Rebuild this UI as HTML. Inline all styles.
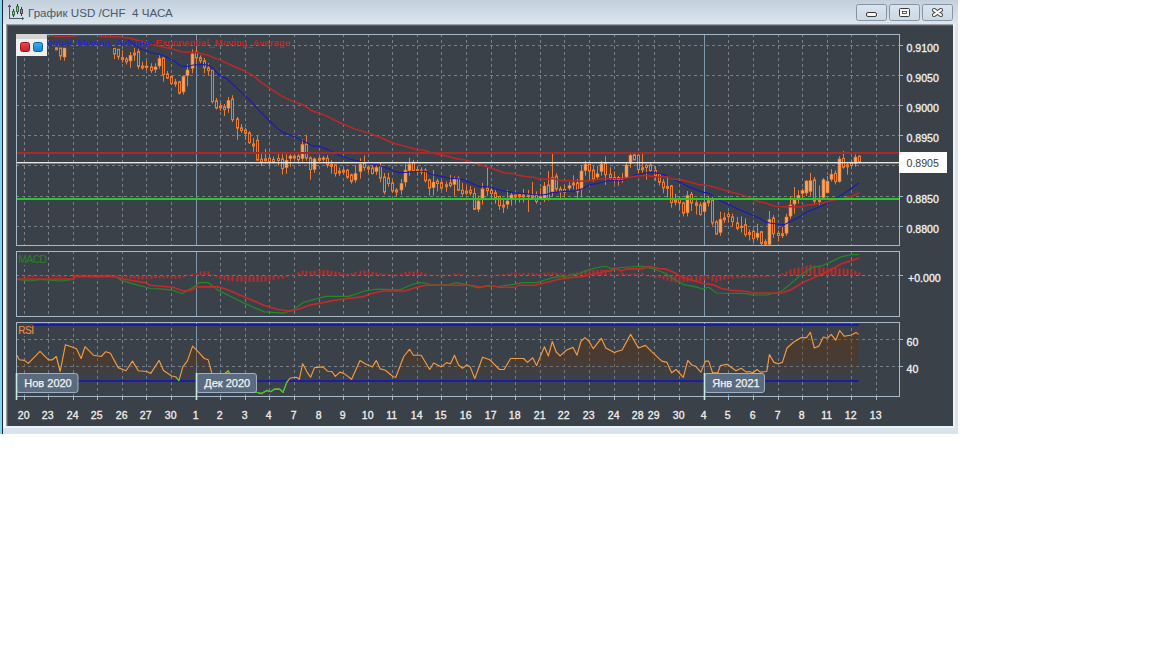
<!DOCTYPE html><html><head><meta charset="utf-8"><style>html,body{margin:0;padding:0;background:#fff;width:1152px;height:648px;overflow:hidden}svg{position:absolute;left:0;top:0;font-family:"Liberation Sans",sans-serif}</style></head><body><svg width="1152" height="648" viewBox="0 0 1152 648"><rect x="0" y="0" width="958" height="434" fill="#d9e3ee"/><defs><linearGradient id="tb" x1="0" y1="0" x2="0" y2="1"><stop offset="0" stop-color="#c3cfdb"/><stop offset="0.85" stop-color="#d6e2ec"/><stop offset="1" stop-color="#dce7f1"/></linearGradient><linearGradient id="rsifill" x1="0" y1="0" x2="0" y2="1"><stop offset="0" stop-color="#5a3a1c"/><stop offset="1" stop-color="#4a3c30"/></linearGradient><linearGradient id="btn" x1="0" y1="0" x2="0" y2="1"><stop offset="0" stop-color="#dbe4ee"/><stop offset="1" stop-color="#cdd8e4"/></linearGradient><linearGradient id="redb" x1="0" y1="0" x2="0" y2="1"><stop offset="0" stop-color="#f04848"/><stop offset="1" stop-color="#c81e2a"/></linearGradient><linearGradient id="blueb" x1="0" y1="0" x2="0" y2="1"><stop offset="0" stop-color="#30b4f0"/><stop offset="1" stop-color="#1a80cc"/></linearGradient><clipPath id="mainclip"><rect x="17" y="35" width="882" height="210"/></clipPath><clipPath id="macdclip"><rect x="17" y="252" width="882" height="63"/></clipPath><clipPath id="lowclip"><rect x="0" y="380.6" width="1152" height="30"/></clipPath><linearGradient id="rsig" gradientUnits="userSpaceOnUse" x1="0" y1="325" x2="0" y2="381"><stop offset="0" stop-color="#643005" stop-opacity="0.45"/><stop offset="0.625" stop-color="#643005" stop-opacity="0.33"/><stop offset="0.84" stop-color="#643005" stop-opacity="0.08"/><stop offset="1" stop-color="#643005" stop-opacity="0"/></linearGradient><clipPath id="rsiclip"><rect x="17" y="323" width="882" height="73"/></clipPath></defs><rect x="3" y="0" width="955" height="24" fill="url(#tb)"/><rect x="0" y="0" width="2" height="434" fill="#84d4f4"/><rect x="2" y="0" width="1" height="434" fill="#1a2430"/><rect x="3" y="24" width="952" height="404" fill="#eef3f8"/><rect x="6" y="24" width="947" height="402" fill="#9a9ea2"/><rect x="7" y="25" width="946" height="401" fill="#585e66"/><rect x="8" y="26" width="945" height="400" fill="#3b4149"/><g fill="none" stroke="#4a5562" stroke-width="1" shape-rendering="crispEdges"><path d="M9.5 5 V18.5 H23"/><path d="M8 6.5 H11"/></g><path d="M7.8 6.8 L9.5 4.3 L11.2 6.8 Z" fill="#4a5562"/><path d="M22 16.8 L24.2 18.5 L22 20.2 Z" fill="#4a5562"/><g stroke="#2e3c34" stroke-width="1" shape-rendering="crispEdges"><path d="M13.5 9 V17"/><path d="M17.5 4 V14"/><path d="M21.5 7 V16"/></g><rect x="12.5" y="11.5" width="2" height="3.5" fill="#98cc98" stroke="#3c6e44" stroke-width="1"/><rect x="16.5" y="6.5" width="2" height="5" fill="#90c890" stroke="#3c6e44" stroke-width="1"/><rect x="20.5" y="9.5" width="2" height="4" fill="#c08aa0" stroke="#5a4050" stroke-width="1"/><text x="28" y="17" font-size="11.6" fill="#4e5862" xml:space="preserve">График USD /CHF  4 ЧАСА</text><rect x="856.5" y="4.5" width="30" height="16" rx="2" fill="url(#btn)" stroke="#8594a4"/><rect x="889.5" y="4.5" width="30" height="16" rx="2" fill="url(#btn)" stroke="#8594a4"/><rect x="922.5" y="4.5" width="30" height="16" rx="2" fill="url(#btn)" stroke="#8594a4"/><rect x="866.5" y="12.5" width="10" height="4" rx="1.5" fill="#f4f4f4" stroke="#3a3a3a" stroke-width="1"/><rect x="899.5" y="8.5" width="10" height="8" rx="1" fill="#f4f4f4" stroke="#3a3a3a" stroke-width="1"/><rect x="902.5" y="11.5" width="4" height="2" fill="#f4f4f4" stroke="#3a3a3a" stroke-width="0.8"/><path d="M934 10 L941 15 M941 10 L934 15" stroke="#3a3a3a" stroke-width="4" stroke-linecap="round"/><path d="M934 10 L941 15 M941 10 L934 15" stroke="#f6f6f6" stroke-width="2.2" stroke-linecap="round"/><g shape-rendering="crispEdges"><line x1="24.5" y1="34" x2="24.5" y2="245" stroke="#75808b" stroke-width="1" stroke-dasharray="3 3"/><line x1="48.5" y1="34" x2="48.5" y2="245" stroke="#75808b" stroke-width="1" stroke-dasharray="3 3"/><line x1="73.5" y1="34" x2="73.5" y2="245" stroke="#75808b" stroke-width="1" stroke-dasharray="3 3"/><line x1="97.5" y1="34" x2="97.5" y2="245" stroke="#75808b" stroke-width="1" stroke-dasharray="3 3"/><line x1="122.5" y1="34" x2="122.5" y2="245" stroke="#75808b" stroke-width="1" stroke-dasharray="3 3"/><line x1="146.5" y1="34" x2="146.5" y2="245" stroke="#75808b" stroke-width="1" stroke-dasharray="3 3"/><line x1="171.5" y1="34" x2="171.5" y2="245" stroke="#75808b" stroke-width="1" stroke-dasharray="3 3"/><line x1="196.5" y1="34" x2="196.5" y2="245" stroke="#8298ac" stroke-width="1"/><line x1="220.5" y1="34" x2="220.5" y2="245" stroke="#75808b" stroke-width="1" stroke-dasharray="3 3"/><line x1="245.5" y1="34" x2="245.5" y2="245" stroke="#75808b" stroke-width="1" stroke-dasharray="3 3"/><line x1="269.5" y1="34" x2="269.5" y2="245" stroke="#75808b" stroke-width="1" stroke-dasharray="3 3"/><line x1="294.5" y1="34" x2="294.5" y2="245" stroke="#75808b" stroke-width="1" stroke-dasharray="3 3"/><line x1="319.5" y1="34" x2="319.5" y2="245" stroke="#75808b" stroke-width="1" stroke-dasharray="3 3"/><line x1="343.5" y1="34" x2="343.5" y2="245" stroke="#75808b" stroke-width="1" stroke-dasharray="3 3"/><line x1="368.5" y1="34" x2="368.5" y2="245" stroke="#75808b" stroke-width="1" stroke-dasharray="3 3"/><line x1="392.5" y1="34" x2="392.5" y2="245" stroke="#75808b" stroke-width="1" stroke-dasharray="3 3"/><line x1="417.5" y1="34" x2="417.5" y2="245" stroke="#75808b" stroke-width="1" stroke-dasharray="3 3"/><line x1="441.5" y1="34" x2="441.5" y2="245" stroke="#75808b" stroke-width="1" stroke-dasharray="3 3"/><line x1="466.5" y1="34" x2="466.5" y2="245" stroke="#75808b" stroke-width="1" stroke-dasharray="3 3"/><line x1="491.5" y1="34" x2="491.5" y2="245" stroke="#75808b" stroke-width="1" stroke-dasharray="3 3"/><line x1="515.5" y1="34" x2="515.5" y2="245" stroke="#75808b" stroke-width="1" stroke-dasharray="3 3"/><line x1="540.5" y1="34" x2="540.5" y2="245" stroke="#75808b" stroke-width="1" stroke-dasharray="3 3"/><line x1="564.5" y1="34" x2="564.5" y2="245" stroke="#75808b" stroke-width="1" stroke-dasharray="3 3"/><line x1="589.5" y1="34" x2="589.5" y2="245" stroke="#75808b" stroke-width="1" stroke-dasharray="3 3"/><line x1="614.5" y1="34" x2="614.5" y2="245" stroke="#75808b" stroke-width="1" stroke-dasharray="3 3"/><line x1="638.5" y1="34" x2="638.5" y2="245" stroke="#75808b" stroke-width="1" stroke-dasharray="3 3"/><line x1="654.5" y1="34" x2="654.5" y2="245" stroke="#75808b" stroke-width="1" stroke-dasharray="3 3"/><line x1="679.5" y1="34" x2="679.5" y2="245" stroke="#75808b" stroke-width="1" stroke-dasharray="3 3"/><line x1="704.5" y1="34" x2="704.5" y2="245" stroke="#8298ac" stroke-width="1"/><line x1="728.5" y1="34" x2="728.5" y2="245" stroke="#75808b" stroke-width="1" stroke-dasharray="3 3"/><line x1="753.5" y1="34" x2="753.5" y2="245" stroke="#75808b" stroke-width="1" stroke-dasharray="3 3"/><line x1="778.5" y1="34" x2="778.5" y2="245" stroke="#75808b" stroke-width="1" stroke-dasharray="3 3"/><line x1="802.5" y1="34" x2="802.5" y2="245" stroke="#75808b" stroke-width="1" stroke-dasharray="3 3"/><line x1="827.5" y1="34" x2="827.5" y2="245" stroke="#75808b" stroke-width="1" stroke-dasharray="3 3"/><line x1="851.5" y1="34" x2="851.5" y2="245" stroke="#75808b" stroke-width="1" stroke-dasharray="3 3"/><line x1="876.5" y1="34" x2="876.5" y2="245" stroke="#75808b" stroke-width="1" stroke-dasharray="3 3"/><line x1="16" y1="45.5" x2="899" y2="45.5" stroke="#75808b" stroke-width="1" stroke-dasharray="3 3"/><line x1="16" y1="75.5" x2="899" y2="75.5" stroke="#75808b" stroke-width="1" stroke-dasharray="3 3"/><line x1="16" y1="105.5" x2="899" y2="105.5" stroke="#75808b" stroke-width="1" stroke-dasharray="3 3"/><line x1="16" y1="135.5" x2="899" y2="135.5" stroke="#75808b" stroke-width="1" stroke-dasharray="3 3"/><line x1="16" y1="165.5" x2="899" y2="165.5" stroke="#75808b" stroke-width="1" stroke-dasharray="3 3"/><line x1="16" y1="196.5" x2="899" y2="196.5" stroke="#75808b" stroke-width="1" stroke-dasharray="3 3"/><line x1="16" y1="226.5" x2="899" y2="226.5" stroke="#75808b" stroke-width="1" stroke-dasharray="3 3"/><line x1="24.5" y1="251" x2="24.5" y2="316" stroke="#75808b" stroke-width="1" stroke-dasharray="3 3"/><line x1="48.5" y1="251" x2="48.5" y2="316" stroke="#75808b" stroke-width="1" stroke-dasharray="3 3"/><line x1="73.5" y1="251" x2="73.5" y2="316" stroke="#75808b" stroke-width="1" stroke-dasharray="3 3"/><line x1="97.5" y1="251" x2="97.5" y2="316" stroke="#75808b" stroke-width="1" stroke-dasharray="3 3"/><line x1="122.5" y1="251" x2="122.5" y2="316" stroke="#75808b" stroke-width="1" stroke-dasharray="3 3"/><line x1="146.5" y1="251" x2="146.5" y2="316" stroke="#75808b" stroke-width="1" stroke-dasharray="3 3"/><line x1="171.5" y1="251" x2="171.5" y2="316" stroke="#75808b" stroke-width="1" stroke-dasharray="3 3"/><line x1="196.5" y1="251" x2="196.5" y2="316" stroke="#8298ac" stroke-width="1"/><line x1="220.5" y1="251" x2="220.5" y2="316" stroke="#75808b" stroke-width="1" stroke-dasharray="3 3"/><line x1="245.5" y1="251" x2="245.5" y2="316" stroke="#75808b" stroke-width="1" stroke-dasharray="3 3"/><line x1="269.5" y1="251" x2="269.5" y2="316" stroke="#75808b" stroke-width="1" stroke-dasharray="3 3"/><line x1="294.5" y1="251" x2="294.5" y2="316" stroke="#75808b" stroke-width="1" stroke-dasharray="3 3"/><line x1="319.5" y1="251" x2="319.5" y2="316" stroke="#75808b" stroke-width="1" stroke-dasharray="3 3"/><line x1="343.5" y1="251" x2="343.5" y2="316" stroke="#75808b" stroke-width="1" stroke-dasharray="3 3"/><line x1="368.5" y1="251" x2="368.5" y2="316" stroke="#75808b" stroke-width="1" stroke-dasharray="3 3"/><line x1="392.5" y1="251" x2="392.5" y2="316" stroke="#75808b" stroke-width="1" stroke-dasharray="3 3"/><line x1="417.5" y1="251" x2="417.5" y2="316" stroke="#75808b" stroke-width="1" stroke-dasharray="3 3"/><line x1="441.5" y1="251" x2="441.5" y2="316" stroke="#75808b" stroke-width="1" stroke-dasharray="3 3"/><line x1="466.5" y1="251" x2="466.5" y2="316" stroke="#75808b" stroke-width="1" stroke-dasharray="3 3"/><line x1="491.5" y1="251" x2="491.5" y2="316" stroke="#75808b" stroke-width="1" stroke-dasharray="3 3"/><line x1="515.5" y1="251" x2="515.5" y2="316" stroke="#75808b" stroke-width="1" stroke-dasharray="3 3"/><line x1="540.5" y1="251" x2="540.5" y2="316" stroke="#75808b" stroke-width="1" stroke-dasharray="3 3"/><line x1="564.5" y1="251" x2="564.5" y2="316" stroke="#75808b" stroke-width="1" stroke-dasharray="3 3"/><line x1="589.5" y1="251" x2="589.5" y2="316" stroke="#75808b" stroke-width="1" stroke-dasharray="3 3"/><line x1="614.5" y1="251" x2="614.5" y2="316" stroke="#75808b" stroke-width="1" stroke-dasharray="3 3"/><line x1="638.5" y1="251" x2="638.5" y2="316" stroke="#75808b" stroke-width="1" stroke-dasharray="3 3"/><line x1="654.5" y1="251" x2="654.5" y2="316" stroke="#75808b" stroke-width="1" stroke-dasharray="3 3"/><line x1="679.5" y1="251" x2="679.5" y2="316" stroke="#75808b" stroke-width="1" stroke-dasharray="3 3"/><line x1="704.5" y1="251" x2="704.5" y2="316" stroke="#8298ac" stroke-width="1"/><line x1="728.5" y1="251" x2="728.5" y2="316" stroke="#75808b" stroke-width="1" stroke-dasharray="3 3"/><line x1="753.5" y1="251" x2="753.5" y2="316" stroke="#75808b" stroke-width="1" stroke-dasharray="3 3"/><line x1="778.5" y1="251" x2="778.5" y2="316" stroke="#75808b" stroke-width="1" stroke-dasharray="3 3"/><line x1="802.5" y1="251" x2="802.5" y2="316" stroke="#75808b" stroke-width="1" stroke-dasharray="3 3"/><line x1="827.5" y1="251" x2="827.5" y2="316" stroke="#75808b" stroke-width="1" stroke-dasharray="3 3"/><line x1="851.5" y1="251" x2="851.5" y2="316" stroke="#75808b" stroke-width="1" stroke-dasharray="3 3"/><line x1="876.5" y1="251" x2="876.5" y2="316" stroke="#75808b" stroke-width="1" stroke-dasharray="3 3"/><line x1="16" y1="275.5" x2="899" y2="275.5" stroke="#75808b" stroke-width="1" stroke-dasharray="3 3"/><line x1="24.5" y1="322" x2="24.5" y2="396" stroke="#75808b" stroke-width="1" stroke-dasharray="3 3"/><line x1="48.5" y1="322" x2="48.5" y2="396" stroke="#75808b" stroke-width="1" stroke-dasharray="3 3"/><line x1="73.5" y1="322" x2="73.5" y2="396" stroke="#75808b" stroke-width="1" stroke-dasharray="3 3"/><line x1="97.5" y1="322" x2="97.5" y2="396" stroke="#75808b" stroke-width="1" stroke-dasharray="3 3"/><line x1="122.5" y1="322" x2="122.5" y2="396" stroke="#75808b" stroke-width="1" stroke-dasharray="3 3"/><line x1="146.5" y1="322" x2="146.5" y2="396" stroke="#75808b" stroke-width="1" stroke-dasharray="3 3"/><line x1="171.5" y1="322" x2="171.5" y2="396" stroke="#75808b" stroke-width="1" stroke-dasharray="3 3"/><line x1="196.5" y1="322" x2="196.5" y2="396" stroke="#8298ac" stroke-width="1"/><line x1="220.5" y1="322" x2="220.5" y2="396" stroke="#75808b" stroke-width="1" stroke-dasharray="3 3"/><line x1="245.5" y1="322" x2="245.5" y2="396" stroke="#75808b" stroke-width="1" stroke-dasharray="3 3"/><line x1="269.5" y1="322" x2="269.5" y2="396" stroke="#75808b" stroke-width="1" stroke-dasharray="3 3"/><line x1="294.5" y1="322" x2="294.5" y2="396" stroke="#75808b" stroke-width="1" stroke-dasharray="3 3"/><line x1="319.5" y1="322" x2="319.5" y2="396" stroke="#75808b" stroke-width="1" stroke-dasharray="3 3"/><line x1="343.5" y1="322" x2="343.5" y2="396" stroke="#75808b" stroke-width="1" stroke-dasharray="3 3"/><line x1="368.5" y1="322" x2="368.5" y2="396" stroke="#75808b" stroke-width="1" stroke-dasharray="3 3"/><line x1="392.5" y1="322" x2="392.5" y2="396" stroke="#75808b" stroke-width="1" stroke-dasharray="3 3"/><line x1="417.5" y1="322" x2="417.5" y2="396" stroke="#75808b" stroke-width="1" stroke-dasharray="3 3"/><line x1="441.5" y1="322" x2="441.5" y2="396" stroke="#75808b" stroke-width="1" stroke-dasharray="3 3"/><line x1="466.5" y1="322" x2="466.5" y2="396" stroke="#75808b" stroke-width="1" stroke-dasharray="3 3"/><line x1="491.5" y1="322" x2="491.5" y2="396" stroke="#75808b" stroke-width="1" stroke-dasharray="3 3"/><line x1="515.5" y1="322" x2="515.5" y2="396" stroke="#75808b" stroke-width="1" stroke-dasharray="3 3"/><line x1="540.5" y1="322" x2="540.5" y2="396" stroke="#75808b" stroke-width="1" stroke-dasharray="3 3"/><line x1="564.5" y1="322" x2="564.5" y2="396" stroke="#75808b" stroke-width="1" stroke-dasharray="3 3"/><line x1="589.5" y1="322" x2="589.5" y2="396" stroke="#75808b" stroke-width="1" stroke-dasharray="3 3"/><line x1="614.5" y1="322" x2="614.5" y2="396" stroke="#75808b" stroke-width="1" stroke-dasharray="3 3"/><line x1="638.5" y1="322" x2="638.5" y2="396" stroke="#75808b" stroke-width="1" stroke-dasharray="3 3"/><line x1="654.5" y1="322" x2="654.5" y2="396" stroke="#75808b" stroke-width="1" stroke-dasharray="3 3"/><line x1="679.5" y1="322" x2="679.5" y2="396" stroke="#75808b" stroke-width="1" stroke-dasharray="3 3"/><line x1="704.5" y1="322" x2="704.5" y2="396" stroke="#8298ac" stroke-width="1"/><line x1="728.5" y1="322" x2="728.5" y2="396" stroke="#75808b" stroke-width="1" stroke-dasharray="3 3"/><line x1="753.5" y1="322" x2="753.5" y2="396" stroke="#75808b" stroke-width="1" stroke-dasharray="3 3"/><line x1="778.5" y1="322" x2="778.5" y2="396" stroke="#75808b" stroke-width="1" stroke-dasharray="3 3"/><line x1="802.5" y1="322" x2="802.5" y2="396" stroke="#75808b" stroke-width="1" stroke-dasharray="3 3"/><line x1="827.5" y1="322" x2="827.5" y2="396" stroke="#75808b" stroke-width="1" stroke-dasharray="3 3"/><line x1="851.5" y1="322" x2="851.5" y2="396" stroke="#75808b" stroke-width="1" stroke-dasharray="3 3"/><line x1="876.5" y1="322" x2="876.5" y2="396" stroke="#75808b" stroke-width="1" stroke-dasharray="3 3"/><line x1="16" y1="339.5" x2="899" y2="339.5" stroke="#75808b" stroke-width="1" stroke-dasharray="3 3"/><line x1="16" y1="366.5" x2="899" y2="366.5" stroke="#75808b" stroke-width="1" stroke-dasharray="3 3"/></g><g clip-path="url(#mainclip)"><path d="M24.5 10.0V20.0M28.5 10.0V20.0M32.5 10.0V20.0M36.5 10.0V20.0M40.5 10.0V20.0M44.5 10.0V20.0M48.5 10.0V20.0M52.5 10.0V20.0M56.5 47.5V49.0M60.5 48.0V60.0M64.5 48.0V60.7M69.5 20.0V35.5M73.5 20.0V35.5M77.5 20.0V35.5M81.5 20.0V35.5M85.5 10.0V25.0M89.5 10.0V25.0M93.5 10.0V25.0M97.5 10.0V25.0M101.5 20.0V35.5M105.5 20.0V35.5M110.5 20.0V35.5M114.5 48.0V59.0M118.5 49.0V59.7M122.5 50.2V62.7M126.5 57.0V64.5M130.5 52.0V67.8M134.5 47.9V60.9M138.5 48.8V69.2M142.5 61.8V69.6M146.5 60.9V70.1M151.5 63.2V72.9M155.5 63.2V72.9M159.5 55.3V68.7M163.5 57.0V81.7M167.5 71.0V78.9M171.5 75.2V84.9M175.5 78.9V86.8M179.5 80.7V94.6M183.5 75.2V94.6M187.5 64.3V86.3M192.5 49.3V73.3M196.5 48.3V62.2M200.5 55.3V63.1M204.5 58.0V73.3M208.5 63.1V75.2M212.5 69.6V103.5M216.5 98.0V109.5M220.5 103.0V110.9M224.5 104.0V116.0M228.5 97.0V112.8M232.5 95.2V122.0M237.5 117.0V139.8M241.5 124.0V132.9M245.5 127.8V139.8M249.5 131.0V144.0M253.5 138.0V151.8M257.5 135.6V160.6M261.5 154.1V166.0M265.5 149.0V161.6M269.5 151.4V165.3M273.5 156.5V163.4M278.5 154.2V165.8M282.5 154.2V174.6M286.5 154.2V173.7M290.5 154.2V166.7M294.5 152.4V160.3M298.5 154.2V163.5M302.5 139.0V161.6M306.5 134.8V160.7M310.5 156.0V179.7M314.5 157.5V172.8M319.5 156.0V163.0M323.5 156.0V161.6M327.5 155.2V167.7M331.5 160.3V173.7M335.5 164.8V176.6M339.5 167.5V175.8M343.5 166.6V174.4M347.5 168.9V179.0M351.5 173.5V183.7M355.5 165.2V182.8M360.5 158.2V178.6M364.5 155.4V170.7M368.5 165.2V173.0M372.5 165.2V174.4M376.5 165.2V174.9M380.5 162.9V182.3M384.5 173.0V194.3M388.5 172.9V186.8M392.5 179.8V192.8M396.5 188.1V196.0M401.5 178.9V194.6M405.5 164.1V186.8M409.5 158.0V175.6M413.5 159.9V171.0M417.5 166.0V175.6M421.5 167.3V174.7M425.5 168.2V182.6M429.5 178.9V195.6M433.5 170.1V195.6M437.5 178.9V191.4M441.5 180.7V190.0M446.5 181.5V191.7M450.5 175.0V187.5M454.5 176.4V195.8M458.5 176.4V190.3M462.5 182.9V195.8M466.5 186.1V195.4M470.5 186.0V195.4M474.5 188.0V210.0M478.5 195.8V212.0M482.5 182.9V204.6M487.5 168.0V195.8M491.5 188.0V198.1M495.5 189.9V203.7M499.5 196.0V209.8M503.5 197.8V213.0M507.5 189.9V208.9M511.5 193.1V205.6M515.5 194.5V202.9M519.5 194.1V202.4M523.5 189.0V202.4M528.5 189.9V212.1M532.5 182.0V196.9M536.5 191.3V203.8M540.5 188.0V199.6M544.5 182.0V202.0M548.5 171.0V200.5M552.5 152.5V196.0M556.5 173.3V191.8M560.5 186.3V198.8M564.5 184.9V196.5M569.5 182.1V190.9M573.5 175.2V189.5M577.5 178.9V198.8M581.5 165.9V197.4M585.5 160.8V175.6M589.5 163.6V179.8M593.5 165.4V181.6M597.5 165.9V179.8M601.5 160.8V175.6M605.5 156.2V184.9M610.5 167.3V179.8M614.5 171.5V183.5M618.5 176.1V185.8M622.5 172.9V182.6M626.5 163.1V178.0M630.5 153.9V167.8M634.5 152.0V160.4M638.5 154.4V174.3M642.5 152.0V173.8M646.5 163.6V179.8M650.5 162.7V171.5M655.5 166.0V180.7M659.5 173.0V185.5M663.5 179.0V193.3M667.5 178.0V197.5M671.5 185.0V207.7M675.5 193.8V205.4M679.5 196.6V210.0M683.5 201.7V216.5M687.5 191.0V216.5M691.5 192.0V211.0M696.5 200.3V214.6M700.5 202.1V215.6M704.5 201.7V212.8M708.5 196.1V206.5M712.5 197.0V225.7M716.5 220.1V234.9M720.5 211.8V235.9M724.5 212.7V222.9M728.5 211.8V222.0M732.5 213.6V226.6M737.5 216.9V230.3M741.5 216.4V232.6M745.5 218.3V236.8M749.5 229.4V240.5M753.5 229.4V243.3M757.5 223.8V240.5M761.5 230.8V246.0M765.5 239.2V246.0M769.5 211.0V246.0M773.5 215.2V237.9M778.5 230.4V241.6M782.5 226.7V237.9M786.5 213.8V236.0M790.5 196.2V218.9M794.5 187.0V213.8M798.5 190.2V203.6M802.5 188.3V199.0M806.5 180.0V196.0M810.5 172.9V196.0M814.5 177.0V203.9M819.5 185.4V205.3M823.5 178.0V199.7M827.5 176.1V193.2M831.5 169.1V181.6M835.5 170.5V184.4M839.5 156.2V182.6M843.5 151.1V168.7M847.5 163.1V174.7M851.5 159.4V168.7M855.5 154.3V166.8M859.5 155.3V163.6" stroke="#ec7c34" stroke-width="1" fill="none"/><g fill="#3b4149" stroke="#ec7c34" stroke-width="1"><rect x="23.5" y="12.0" width="2" height="6.0"/><rect x="27.5" y="12.0" width="2" height="6.0"/><rect x="31.5" y="12.0" width="2" height="6.0"/><rect x="35.5" y="12.0" width="2" height="6.0"/><rect x="39.5" y="12.0" width="2" height="6.0"/><rect x="43.5" y="12.0" width="2" height="6.0"/><rect x="47.5" y="12.0" width="2" height="6.0"/><rect x="51.5" y="12.0" width="2" height="6.0"/><rect x="55.5" y="47.8" width="2" height="2.0"/><rect x="59.5" y="48.0" width="2" height="8.0"/><rect x="68.5" y="25.0" width="2" height="5.0"/><rect x="76.5" y="25.0" width="2" height="5.0"/><rect x="80.5" y="25.0" width="2" height="5.0"/><rect x="84.5" y="12.0" width="2" height="8.0"/><rect x="88.5" y="12.0" width="2" height="8.0"/><rect x="92.5" y="12.0" width="2" height="8.0"/><rect x="96.5" y="12.0" width="2" height="8.0"/><rect x="100.5" y="25.0" width="2" height="5.0"/><rect x="109.5" y="25.0" width="2" height="5.0"/><rect x="113.5" y="48.0" width="2" height="6.0"/><rect x="117.5" y="49.3" width="2" height="7.4"/><rect x="121.5" y="57.6" width="2" height="2.0"/><rect x="125.5" y="59.0" width="2" height="2.8"/><rect x="133.5" y="53.0" width="2" height="2.0"/><rect x="137.5" y="51.6" width="2" height="14.8"/><rect x="141.5" y="66.0" width="2" height="2.0"/><rect x="150.5" y="66.9" width="2" height="3.7"/><rect x="162.5" y="58.0" width="2" height="16.7"/><rect x="166.5" y="73.8" width="2" height="4.2"/><rect x="170.5" y="76.6" width="2" height="6.9"/><rect x="174.5" y="82.0" width="2" height="2.0"/><rect x="178.5" y="81.7" width="2" height="11.5"/><rect x="195.5" y="52.0" width="2" height="6.0"/><rect x="199.5" y="57.6" width="2" height="3.2"/><rect x="203.5" y="60.8" width="2" height="7.0"/><rect x="207.5" y="67.8" width="2" height="2.8"/><rect x="211.5" y="70.4" width="2" height="31.2"/><rect x="215.5" y="100.7" width="2" height="7.4"/><rect x="219.5" y="106.0" width="2" height="2.0"/><rect x="223.5" y="106.7" width="2" height="2.8"/><rect x="231.5" y="98.9" width="2" height="20.8"/><rect x="236.5" y="119.0" width="2" height="9.2"/><rect x="240.5" y="127.8" width="2" height="2.7"/><rect x="244.5" y="130.0" width="2" height="3.3"/><rect x="248.5" y="132.9" width="2" height="9.7"/><rect x="252.5" y="144.0" width="2" height="2.0"/><rect x="256.5" y="140.3" width="2" height="19.9"/><rect x="260.5" y="159.2" width="2" height="2.4"/><rect x="264.5" y="158.8" width="2" height="2.0"/><rect x="268.5" y="158.3" width="2" height="3.3"/><rect x="272.5" y="159.5" width="2" height="2.0"/><rect x="277.5" y="158.5" width="2" height="2.0"/><rect x="281.5" y="158.9" width="2" height="9.7"/><rect x="293.5" y="156.1" width="2" height="2.0"/><rect x="297.5" y="156.0" width="2" height="3.8"/><rect x="305.5" y="144.0" width="2" height="14.0"/><rect x="309.5" y="158.0" width="2" height="11.5"/><rect x="318.5" y="158.4" width="2" height="2.0"/><rect x="326.5" y="158.4" width="2" height="6.5"/><rect x="330.5" y="164.4" width="2" height="2.0"/><rect x="334.5" y="164.8" width="2" height="8.7"/><rect x="338.5" y="171.1" width="2" height="2.0"/><rect x="342.5" y="170.2" width="2" height="2.0"/><rect x="346.5" y="170.3" width="2" height="6.9"/><rect x="350.5" y="174.9" width="2" height="6.5"/><rect x="363.5" y="162.9" width="2" height="4.6"/><rect x="367.5" y="167.0" width="2" height="2.0"/><rect x="371.5" y="168.0" width="2" height="5.5"/><rect x="379.5" y="166.1" width="2" height="12.0"/><rect x="383.5" y="177.0" width="2" height="15.0"/><rect x="387.5" y="178.0" width="2" height="5.5"/><rect x="391.5" y="183.0" width="2" height="8.0"/><rect x="395.5" y="190.0" width="2" height="2.0"/><rect x="412.5" y="162.2" width="2" height="8.4"/><rect x="416.5" y="169.6" width="2" height="2.0"/><rect x="420.5" y="170.1" width="2" height="2.0"/><rect x="424.5" y="170.1" width="2" height="10.6"/><rect x="428.5" y="179.8" width="2" height="8.3"/><rect x="436.5" y="181.2" width="2" height="2.3"/><rect x="440.5" y="182.6" width="2" height="5.5"/><rect x="445.5" y="184.7" width="2" height="2.0"/><rect x="449.5" y="182.9" width="2" height="2.7"/><rect x="457.5" y="178.2" width="2" height="12.1"/><rect x="461.5" y="190.3" width="2" height="3.2"/><rect x="465.5" y="191.2" width="2" height="2.0"/><rect x="469.5" y="190.3" width="2" height="2.7"/><rect x="473.5" y="193.5" width="2" height="15.8"/><rect x="486.5" y="188.0" width="2" height="2.7"/><rect x="490.5" y="190.3" width="2" height="3.2"/><rect x="494.5" y="192.7" width="2" height="5.4"/><rect x="498.5" y="196.4" width="2" height="9.2"/><rect x="502.5" y="205.1" width="2" height="2.0"/><rect x="514.5" y="195.0" width="2" height="2.0"/><rect x="518.5" y="194.6" width="2" height="2.0"/><rect x="522.5" y="195.0" width="2" height="2.0"/><rect x="527.5" y="194.6" width="2" height="2.0"/><rect x="531.5" y="195.6" width="2" height="2.0"/><rect x="535.5" y="195.0" width="2" height="6.5"/><rect x="547.5" y="185.0" width="2" height="14.0"/><rect x="555.5" y="176.1" width="2" height="12.9"/><rect x="559.5" y="189.0" width="2" height="2.8"/><rect x="563.5" y="189.5" width="2" height="2.8"/><rect x="572.5" y="183.0" width="2" height="2.0"/><rect x="576.5" y="183.0" width="2" height="8.8"/><rect x="588.5" y="164.5" width="2" height="6.5"/><rect x="592.5" y="170.1" width="2" height="8.8"/><rect x="604.5" y="163.1" width="2" height="11.6"/><rect x="609.5" y="174.3" width="2" height="4.1"/><rect x="613.5" y="177.5" width="2" height="2.0"/><rect x="617.5" y="177.5" width="2" height="2.0"/><rect x="633.5" y="154.8" width="2" height="5.1"/><rect x="637.5" y="155.3" width="2" height="14.3"/><rect x="641.5" y="167.7" width="2" height="2.0"/><rect x="645.5" y="165.5" width="2" height="2.0"/><rect x="649.5" y="165.0" width="2" height="5.6"/><rect x="654.5" y="170.4" width="2" height="5.7"/><rect x="658.5" y="173.9" width="2" height="8.3"/><rect x="662.5" y="182.2" width="2" height="5.6"/><rect x="666.5" y="186.4" width="2" height="2.0"/><rect x="670.5" y="185.9" width="2" height="16.7"/><rect x="674.5" y="200.2" width="2" height="2.0"/><rect x="678.5" y="198.4" width="2" height="4.6"/><rect x="682.5" y="203.0" width="2" height="10.2"/><rect x="690.5" y="194.3" width="2" height="8.7"/><rect x="695.5" y="203.0" width="2" height="2.4"/><rect x="699.5" y="204.9" width="2" height="9.7"/><rect x="707.5" y="200.7" width="2" height="2.0"/><rect x="711.5" y="200.2" width="2" height="22.7"/><rect x="715.5" y="222.0" width="2" height="12.0"/><rect x="723.5" y="217.8" width="2" height="2.0"/><rect x="727.5" y="214.5" width="2" height="2.0"/><rect x="731.5" y="216.9" width="2" height="4.6"/><rect x="736.5" y="222.9" width="2" height="5.5"/><rect x="744.5" y="224.7" width="2" height="9.8"/><rect x="748.5" y="232.6" width="2" height="2.0"/><rect x="752.5" y="231.2" width="2" height="7.4"/><rect x="760.5" y="231.7" width="2" height="11.7"/><rect x="764.5" y="241.6" width="2" height="2.7"/><rect x="772.5" y="218.0" width="2" height="15.7"/><rect x="777.5" y="233.2" width="2" height="2.3"/><rect x="781.5" y="233.6" width="2" height="2.0"/><rect x="813.5" y="179.8" width="2" height="21.3"/><rect x="818.5" y="199.7" width="2" height="2.0"/><rect x="834.5" y="173.3" width="2" height="8.3"/><rect x="842.5" y="158.5" width="2" height="8.8"/><rect x="846.5" y="164.9" width="2" height="2.0"/><rect x="850.5" y="163.5" width="2" height="2.0"/><rect x="858.5" y="156.2" width="2" height="6.0"/></g><g fill="#f7a463" stroke="#e8782c" stroke-width="0.6"><rect x="63" y="48.0" width="3" height="9.0"/><rect x="72" y="25.0" width="3" height="5.0"/><rect x="104" y="25.0" width="3" height="5.0"/><rect x="129" y="55.3" width="3" height="5.6"/><rect x="145" y="66.0" width="3" height="1.5"/><rect x="154" y="66.9" width="3" height="2.7"/><rect x="158" y="58.5" width="3" height="7.5"/><rect x="182" y="76.6" width="3" height="15.3"/><rect x="186" y="70.0" width="3" height="5.6"/><rect x="191" y="53.9" width="3" height="14.3"/><rect x="227" y="100.3" width="3" height="7.8"/><rect x="285" y="160.3" width="3" height="7.4"/><rect x="289" y="156.0" width="3" height="2.4"/><rect x="301" y="144.5" width="3" height="13.9"/><rect x="313" y="158.9" width="3" height="10.6"/><rect x="322" y="157.9" width="3" height="1.5"/><rect x="354" y="173.5" width="3" height="6.5"/><rect x="359" y="164.2" width="3" height="7.4"/><rect x="375" y="167.5" width="3" height="4.1"/><rect x="400" y="183.5" width="3" height="6.5"/><rect x="404" y="170.1" width="3" height="12.0"/><rect x="408" y="164.5" width="3" height="6.1"/><rect x="432" y="182.1" width="3" height="5.6"/><rect x="453" y="179.2" width="3" height="5.1"/><rect x="477" y="201.0" width="3" height="8.3"/><rect x="481" y="188.9" width="3" height="10.1"/><rect x="506" y="201.0" width="3" height="3.3"/><rect x="510" y="195.0" width="3" height="3.2"/><rect x="539" y="196.8" width="3" height="1.5"/><rect x="543" y="186.0" width="3" height="12.0"/><rect x="551" y="177.5" width="3" height="14.3"/><rect x="568" y="185.8" width="3" height="2.3"/><rect x="580" y="171.0" width="3" height="18.5"/><rect x="584" y="164.5" width="3" height="6.0"/><rect x="596" y="173.8" width="3" height="3.2"/><rect x="600" y="164.1" width="3" height="7.4"/><rect x="621" y="178.0" width="3" height="1.8"/><rect x="625" y="165.0" width="3" height="12.0"/><rect x="629" y="155.3" width="3" height="7.8"/><rect x="686" y="195.6" width="3" height="17.2"/><rect x="703" y="202.5" width="3" height="9.1"/><rect x="719" y="219.2" width="3" height="13.4"/><rect x="740" y="226.1" width="3" height="1.5"/><rect x="756" y="233.1" width="3" height="4.4"/><rect x="768" y="219.3" width="3" height="25.0"/><rect x="785" y="217.0" width="3" height="16.2"/><rect x="789" y="205.0" width="3" height="11.1"/><rect x="793" y="199.9" width="3" height="4.1"/><rect x="797" y="195.3" width="3" height="2.7"/><rect x="801" y="190.6" width="3" height="2.8"/><rect x="805" y="181.0" width="3" height="12.0"/><rect x="809" y="180.7" width="3" height="10.7"/><rect x="822" y="179.8" width="3" height="17.6"/><rect x="826" y="181.2" width="3" height="11.6"/><rect x="830" y="174.2" width="3" height="5.1"/><rect x="838" y="159.0" width="3" height="22.6"/><rect x="854" y="157.1" width="3" height="6.5"/></g><path d="M128.0 40.0 L140.1 48.6 L151.3 52.8 L161.7 54.8 L169.3 58.5 L175.6 61.8 L178.5 64.5 L182.2 66.4 L188.7 66.4 L193.3 65.0 L201.7 64.5 L208.1 65.0 L211.9 67.8 L220.8 76.2 L227.3 79.0 L235.6 86.8 L250.4 100.7 L256.0 107.2 L260.0 111.3 L269.7 121.0 L275.1 126.4 L282.7 132.4 L295.6 137.2 L301.9 140.4 L306.6 142.7 L313.0 145.9 L320.4 146.8 L327.9 149.6 L336.5 154.0 L348.5 158.7 L357.8 161.0 L367.0 162.9 L378.1 165.2 L390.0 169.3 L393.3 171.0 L399.7 172.9 L410.0 172.0 L425.7 171.0 L430.3 174.3 L439.6 176.1 L450.0 178.2 L459.3 178.7 L465.8 180.6 L475.0 184.7 L479.7 186.6 L489.9 187.0 L499.3 189.9 L505.7 191.3 L514.0 192.7 L525.2 193.6 L531.7 194.5 L541.9 195.0 L547.4 194.1 L551.4 192.8 L565.3 191.4 L575.5 190.9 L582.9 188.6 L589.4 184.9 L597.7 183.5 L607.3 180.7 L621.1 180.7 L628.6 178.0 L635.0 174.7 L646.1 172.9 L655.4 172.9 L665.0 174.8 L670.5 178.5 L679.8 182.2 L689.0 186.9 L698.3 190.6 L703.9 192.4 L707.6 192.9 L712.3 195.6 L716.0 198.8 L720.7 201.1 L728.1 204.4 L741.0 210.4 L752.1 215.0 L759.6 218.3 L765.3 222.1 L769.9 223.0 L776.4 224.0 L783.8 224.9 L788.4 222.6 L797.7 218.0 L806.9 211.9 L816.0 208.2 L824.5 205.0 L835.6 198.8 L843.0 194.1 L852.3 187.7 L858.8 183.0" fill="none" stroke="#1a1ab8" stroke-width="1.15"/><path d="M40.0 35.0 L47.0 35.0 L55.0 36.5 L70.0 36.5 L80.0 35.0 L98.0 35.0 L100.0 36.5 L120.0 36.8 L130.4 38.2 L150.0 44.0 L170.0 48.6 L182.5 52.0 L196.4 52.4 L208.1 55.3 L215.6 58.5 L220.0 59.9 L232.9 66.0 L243.0 70.2 L254.1 76.2 L260.0 81.6 L269.7 88.1 L281.6 96.2 L294.6 102.1 L303.2 104.8 L311.8 110.8 L324.8 115.1 L341.0 123.2 L354.0 128.6 L368.0 132.9 L380.0 137.2 L393.3 143.2 L402.5 145.6 L413.6 148.8 L424.7 150.6 L432.1 153.0 L444.0 155.3 L454.7 158.3 L467.6 160.6 L473.2 162.5 L479.7 164.8 L486.1 166.7 L493.6 169.0 L499.3 171.0 L503.9 172.8 L514.0 173.7 L516.9 175.1 L525.2 176.5 L534.4 177.4 L538.0 178.8 L547.4 179.3 L552.3 178.4 L562.5 180.7 L571.8 180.7 L585.7 181.2 L599.6 178.9 L625.8 178.4 L633.2 176.6 L644.3 175.6 L658.0 177.0 L667.7 176.7 L671.4 179.0 L679.8 179.4 L689.0 181.8 L698.3 184.5 L707.6 185.5 L713.3 186.8 L722.5 189.6 L731.8 192.3 L741.0 194.6 L750.3 197.9 L759.6 202.0 L765.3 202.7 L769.0 204.5 L776.4 206.4 L783.8 206.8 L802.3 206.8 L806.9 205.0 L813.4 204.5 L824.5 202.5 L836.0 199.5 L843.0 198.6 L851.0 196.5 L859.7 192.8" fill="none" stroke="#bc2828" stroke-width="1.5"/><rect x="17" y="152" width="882" height="2" fill="#a82a2c"/><rect x="17" y="198" width="882" height="2" fill="#28c828"/><rect x="17" y="162" width="882" height="1.4" fill="#e6e6e6"/></g><g clip-path="url(#macdclip)"><g fill="#c02a2a"><rect x="23.5" y="275.5" width="2" height="1.3"/><rect x="27.5" y="275.5" width="2" height="1.7"/><rect x="31.5" y="275.5" width="2" height="1.8"/><rect x="35.5" y="275.5" width="2" height="1.1"/><rect x="39.5" y="275.5" width="2" height="0.8"/><rect x="43.5" y="275.5" width="2" height="0.8"/><rect x="47.5" y="275.5" width="2" height="1.1"/><rect x="51.5" y="275.5" width="2" height="1.4"/><rect x="55.5" y="275.5" width="2" height="1.7"/><rect x="59.5" y="275.5" width="2" height="2.0"/><rect x="63.5" y="275.5" width="2" height="1.6"/><rect x="68.5" y="275.5" width="2" height="0.9"/><rect x="72.5" y="274.2" width="2" height="1.2"/><rect x="76.5" y="274.7" width="2" height="0.8"/><rect x="80.5" y="274.7" width="2" height="0.8"/><rect x="84.5" y="274.7" width="2" height="0.8"/><rect x="88.5" y="274.7" width="2" height="0.8"/><rect x="92.5" y="274.7" width="2" height="0.8"/><rect x="96.5" y="274.7" width="2" height="0.8"/><rect x="100.5" y="274.7" width="2" height="0.8"/><rect x="104.5" y="274.7" width="2" height="0.8"/><rect x="109.5" y="274.7" width="2" height="0.8"/><rect x="113.5" y="274.7" width="2" height="0.8"/><rect x="117.5" y="275.5" width="2" height="0.8"/><rect x="121.5" y="275.5" width="2" height="2.0"/><rect x="125.5" y="275.5" width="2" height="2.4"/><rect x="129.5" y="275.5" width="2" height="2.9"/><rect x="133.5" y="275.5" width="2" height="3.4"/><rect x="137.5" y="275.5" width="2" height="3.8"/><rect x="141.5" y="275.5" width="2" height="4.1"/><rect x="145.5" y="275.5" width="2" height="3.9"/><rect x="150.5" y="275.5" width="2" height="3.3"/><rect x="154.5" y="275.5" width="2" height="3.0"/><rect x="158.5" y="275.5" width="2" height="2.8"/><rect x="162.5" y="275.5" width="2" height="2.6"/><rect x="166.5" y="275.5" width="2" height="2.8"/><rect x="170.5" y="275.5" width="2" height="3.1"/><rect x="174.5" y="275.5" width="2" height="3.2"/><rect x="178.5" y="275.5" width="2" height="3.2"/><rect x="182.5" y="275.5" width="2" height="1.9"/><rect x="186.5" y="274.7" width="2" height="0.8"/><rect x="191.5" y="273.7" width="2" height="1.8"/><rect x="195.5" y="272.8" width="2" height="2.7"/><rect x="199.5" y="271.2" width="2" height="4.3"/><rect x="203.5" y="271.2" width="2" height="4.3"/><rect x="207.5" y="271.4" width="2" height="4.1"/><rect x="211.5" y="274.4" width="2" height="1.1"/><rect x="215.5" y="275.5" width="2" height="1.9"/><rect x="219.5" y="275.5" width="2" height="3.9"/><rect x="223.5" y="275.5" width="2" height="4.6"/><rect x="227.5" y="275.5" width="2" height="5.3"/><rect x="231.5" y="275.5" width="2" height="5.6"/><rect x="236.5" y="275.5" width="2" height="6.0"/><rect x="240.5" y="275.5" width="2" height="6.3"/><rect x="244.5" y="275.5" width="2" height="6.5"/><rect x="248.5" y="275.5" width="2" height="6.5"/><rect x="252.5" y="275.5" width="2" height="6.5"/><rect x="256.5" y="275.5" width="2" height="6.5"/><rect x="260.5" y="275.5" width="2" height="6.5"/><rect x="264.5" y="275.5" width="2" height="6.2"/><rect x="268.5" y="275.5" width="2" height="5.3"/><rect x="272.5" y="275.5" width="2" height="4.3"/><rect x="277.5" y="275.5" width="2" height="3.4"/><rect x="281.5" y="275.5" width="2" height="3.0"/><rect x="285.5" y="275.5" width="2" height="1.5"/><rect x="289.5" y="274.7" width="2" height="0.8"/><rect x="293.5" y="274.4" width="2" height="1.1"/><rect x="297.5" y="272.4" width="2" height="3.1"/><rect x="301.5" y="270.7" width="2" height="4.8"/><rect x="305.5" y="270.8" width="2" height="4.7"/><rect x="309.5" y="271.1" width="2" height="4.4"/><rect x="313.5" y="270.7" width="2" height="4.8"/><rect x="318.5" y="270.3" width="2" height="5.2"/><rect x="322.5" y="269.9" width="2" height="5.6"/><rect x="326.5" y="270.1" width="2" height="5.4"/><rect x="330.5" y="270.9" width="2" height="4.6"/><rect x="334.5" y="271.5" width="2" height="4.0"/><rect x="338.5" y="272.1" width="2" height="3.4"/><rect x="342.5" y="272.8" width="2" height="2.7"/><rect x="346.5" y="273.4" width="2" height="2.1"/><rect x="350.5" y="273.0" width="2" height="2.5"/><rect x="354.5" y="272.0" width="2" height="3.5"/><rect x="359.5" y="270.8" width="2" height="4.7"/><rect x="363.5" y="270.5" width="2" height="5.0"/><rect x="367.5" y="271.3" width="2" height="4.2"/><rect x="371.5" y="272.0" width="2" height="3.5"/><rect x="375.5" y="272.3" width="2" height="3.2"/><rect x="379.5" y="273.2" width="2" height="2.3"/><rect x="383.5" y="273.8" width="2" height="1.7"/><rect x="387.5" y="273.9" width="2" height="1.6"/><rect x="391.5" y="274.1" width="2" height="1.4"/><rect x="395.5" y="274.2" width="2" height="1.3"/><rect x="400.5" y="273.5" width="2" height="2.0"/><rect x="404.5" y="271.9" width="2" height="3.6"/><rect x="408.5" y="271.5" width="2" height="4.0"/><rect x="412.5" y="271.5" width="2" height="4.0"/><rect x="416.5" y="271.6" width="2" height="3.9"/><rect x="420.5" y="272.2" width="2" height="3.3"/><rect x="424.5" y="273.4" width="2" height="2.1"/><rect x="428.5" y="274.7" width="2" height="0.8"/><rect x="432.5" y="274.7" width="2" height="0.8"/><rect x="436.5" y="274.7" width="2" height="0.8"/><rect x="440.5" y="274.7" width="2" height="0.8"/><rect x="445.5" y="274.7" width="2" height="0.8"/><rect x="449.5" y="274.5" width="2" height="1.0"/><rect x="453.5" y="273.3" width="2" height="2.2"/><rect x="457.5" y="273.4" width="2" height="2.1"/><rect x="461.5" y="274.2" width="2" height="1.3"/><rect x="465.5" y="274.7" width="2" height="0.8"/><rect x="469.5" y="275.5" width="2" height="0.8"/><rect x="473.5" y="275.5" width="2" height="1.1"/><rect x="477.5" y="275.5" width="2" height="1.1"/><rect x="481.5" y="274.7" width="2" height="0.8"/><rect x="486.5" y="275.5" width="2" height="0.8"/><rect x="490.5" y="275.5" width="2" height="0.8"/><rect x="494.5" y="274.7" width="2" height="0.8"/><rect x="498.5" y="274.5" width="2" height="1.0"/><rect x="502.5" y="274.0" width="2" height="1.5"/><rect x="506.5" y="273.5" width="2" height="2.0"/><rect x="510.5" y="273.0" width="2" height="2.5"/><rect x="514.5" y="272.2" width="2" height="3.3"/><rect x="518.5" y="273.4" width="2" height="2.1"/><rect x="522.5" y="272.9" width="2" height="2.6"/><rect x="527.5" y="272.9" width="2" height="2.6"/><rect x="531.5" y="272.9" width="2" height="2.6"/><rect x="535.5" y="273.4" width="2" height="2.1"/><rect x="539.5" y="273.1" width="2" height="2.4"/><rect x="543.5" y="272.8" width="2" height="2.7"/><rect x="547.5" y="272.6" width="2" height="2.9"/><rect x="551.5" y="272.3" width="2" height="3.2"/><rect x="555.5" y="272.7" width="2" height="2.8"/><rect x="559.5" y="273.2" width="2" height="2.3"/><rect x="563.5" y="273.3" width="2" height="2.2"/><rect x="568.5" y="273.3" width="2" height="2.2"/><rect x="572.5" y="272.9" width="2" height="2.6"/><rect x="576.5" y="272.4" width="2" height="3.1"/><rect x="580.5" y="271.4" width="2" height="4.1"/><rect x="584.5" y="270.6" width="2" height="4.9"/><rect x="588.5" y="270.0" width="2" height="5.5"/><rect x="592.5" y="270.1" width="2" height="5.4"/><rect x="596.5" y="269.8" width="2" height="5.7"/><rect x="600.5" y="269.5" width="2" height="6.0"/><rect x="604.5" y="270.9" width="2" height="4.6"/><rect x="609.5" y="273.1" width="2" height="2.4"/><rect x="613.5" y="274.7" width="2" height="0.8"/><rect x="617.5" y="273.7" width="2" height="1.8"/><rect x="621.5" y="272.6" width="2" height="2.9"/><rect x="625.5" y="273.7" width="2" height="1.8"/><rect x="629.5" y="273.5" width="2" height="2.0"/><rect x="633.5" y="273.3" width="2" height="2.2"/><rect x="637.5" y="273.1" width="2" height="2.4"/><rect x="641.5" y="273.0" width="2" height="2.5"/><rect x="645.5" y="275.5" width="2" height="0.8"/><rect x="649.5" y="275.5" width="2" height="1.3"/><rect x="654.5" y="275.5" width="2" height="1.8"/><rect x="658.5" y="275.5" width="2" height="2.4"/><rect x="662.5" y="275.5" width="2" height="3.8"/><rect x="666.5" y="275.5" width="2" height="5.1"/><rect x="670.5" y="275.5" width="2" height="6.1"/><rect x="674.5" y="275.5" width="2" height="6.8"/><rect x="678.5" y="275.5" width="2" height="6.7"/><rect x="682.5" y="275.5" width="2" height="6.7"/><rect x="686.5" y="275.5" width="2" height="6.4"/><rect x="690.5" y="275.5" width="2" height="6.0"/><rect x="695.5" y="275.5" width="2" height="5.5"/><rect x="699.5" y="275.5" width="2" height="5.8"/><rect x="703.5" y="275.5" width="2" height="4.9"/><rect x="707.5" y="275.5" width="2" height="3.2"/><rect x="711.5" y="275.5" width="2" height="5.4"/><rect x="715.5" y="275.5" width="2" height="6.7"/><rect x="719.5" y="275.5" width="2" height="5.1"/><rect x="723.5" y="275.5" width="2" height="4.2"/><rect x="727.5" y="275.5" width="2" height="3.5"/><rect x="731.5" y="275.5" width="2" height="2.9"/><rect x="736.5" y="275.5" width="2" height="2.7"/><rect x="740.5" y="275.5" width="2" height="2.5"/><rect x="744.5" y="275.5" width="2" height="2.3"/><rect x="748.5" y="275.5" width="2" height="2.4"/><rect x="752.5" y="275.5" width="2" height="2.0"/><rect x="756.5" y="275.5" width="2" height="2.0"/><rect x="760.5" y="275.5" width="2" height="2.0"/><rect x="764.5" y="275.5" width="2" height="2.0"/><rect x="768.5" y="275.5" width="2" height="1.4"/><rect x="772.5" y="275.5" width="2" height="0.8"/><rect x="777.5" y="274.4" width="2" height="1.1"/><rect x="781.5" y="273.2" width="2" height="2.3"/><rect x="785.5" y="271.3" width="2" height="4.2"/><rect x="789.5" y="269.4" width="2" height="6.1"/><rect x="793.5" y="268.4" width="2" height="7.1"/><rect x="797.5" y="267.5" width="2" height="8.0"/><rect x="801.5" y="266.8" width="2" height="8.7"/><rect x="805.5" y="265.8" width="2" height="9.7"/><rect x="809.5" y="264.8" width="2" height="10.7"/><rect x="813.5" y="265.3" width="2" height="10.2"/><rect x="818.5" y="266.6" width="2" height="8.9"/><rect x="822.5" y="267.4" width="2" height="8.1"/><rect x="826.5" y="267.4" width="2" height="8.1"/><rect x="830.5" y="267.8" width="2" height="7.7"/><rect x="834.5" y="268.1" width="2" height="7.4"/><rect x="838.5" y="268.3" width="2" height="7.2"/><rect x="842.5" y="268.6" width="2" height="6.9"/><rect x="846.5" y="269.1" width="2" height="6.4"/><rect x="850.5" y="269.5" width="2" height="6.0"/><rect x="854.5" y="270.8" width="2" height="4.7"/><rect x="858.5" y="272.2" width="2" height="3.3"/></g><path d="M17.0 279.5 L31.0 281.0 L40.0 279.5 L61.0 281.0 L73.0 279.5 L74.0 276.0 L115.0 276.0 L122.0 280.6 L137.7 285.2 L150.7 288.5 L164.0 289.1 L173.0 290.4 L182.1 293.7 L195.2 285.9 L199.0 282.6 L208.2 282.6 L218.6 290.4 L227.7 295.0 L244.6 303.4 L264.2 311.9 L283.7 313.2 L294.1 309.3 L303.2 302.5 L319.0 298.2 L325.5 296.3 L349.0 296.3 L364.6 291.0 L377.6 289.1 L399.8 289.8 L410.2 285.2 L419.3 282.6 L425.8 283.2 L431.0 285.2 L449.2 284.6 L456.0 282.6 L466.3 284.6 L478.0 287.8 L485.9 285.9 L497.6 286.5 L511.9 284.6 L522.3 282.6 L536.6 282.6 L553.6 277.4 L566.6 276.1 L579.6 273.5 L588.7 269.6 L600.0 267.0 L605.8 266.3 L611.0 268.7 L628.0 267.0 L642.3 266.3 L654.0 268.9 L665.7 273.5 L676.1 280.6 L683.9 284.6 L697.0 287.2 L702.2 289.1 L708.7 287.2 L716.5 293.0 L748.0 293.7 L750.5 295.0 L767.4 295.0 L781.8 291.0 L789.6 284.6 L801.3 274.8 L811.7 267.6 L822.1 265.7 L832.5 261.1 L841.7 256.6 L852.1 254.6 L859.2 254.6" fill="none" stroke="#22882a" stroke-width="1.2"/><path d="M17.0 279.0 L74.0 279.0 L74.5 276.7 L115.6 276.7 L122.0 278.7 L144.2 282.6 L150.7 285.2 L164.0 286.5 L173.0 287.2 L183.4 291.0 L190.0 290.4 L197.8 286.9 L218.6 286.9 L227.7 289.8 L244.6 296.9 L264.2 305.4 L277.2 309.3 L290.2 311.2 L300.6 308.6 L310.0 305.0 L319.0 303.4 L332.0 300.8 L349.0 298.2 L362.0 296.9 L371.1 293.7 L382.8 291.0 L405.0 291.0 L416.7 287.2 L425.8 285.2 L471.5 285.2 L482.0 287.2 L489.8 285.2 L498.9 287.2 L515.8 287.2 L518.4 285.2 L534.0 285.2 L543.1 283.2 L551.0 281.3 L558.8 279.3 L571.8 277.4 L582.2 276.7 L595.2 273.5 L602.0 272.8 L604.5 270.9 L611.0 270.9 L614.9 268.3 L621.4 270.9 L626.6 268.9 L642.3 268.9 L647.5 266.6 L652.7 267.0 L659.2 268.7 L665.7 268.9 L673.5 272.2 L682.6 277.4 L693.0 280.6 L702.2 283.2 L712.6 284.6 L721.7 288.5 L732.1 290.4 L748.0 291.5 L752.0 293.0 L781.8 293.0 L790.9 289.8 L802.6 282.6 L814.3 277.4 L827.3 271.5 L841.7 263.7 L852.1 260.5 L859.2 257.9" fill="none" stroke="#c82828" stroke-width="1.6"/></g><g clip-path="url(#rsiclip)"><rect x="17" y="324" width="842" height="2" fill="#1c1ca8"/><rect x="17" y="380" width="842" height="2" fill="#1c1ca8"/><path d="M17.0 355.2 L19.2 359.8 L24.4 360.4 L28.3 363.4 L40.0 351.3 L48.5 359.8 L52.4 359.8 L56.3 356.5 L60.2 371.5 L65.4 344.8 L71.3 346.7 L76.5 348.7 L81.1 358.5 L85.0 346.7 L93.4 355.2 L101.2 356.5 L105.8 351.7 L110.4 353.3 L118.2 367.6 L126.0 370.8 L132.5 361.1 L138.3 370.8 L146.8 371.5 L150.7 373.4 L159.2 360.4 L163.5 370.5 L171.7 376.0 L175.6 376.7 L178.9 380.6 L182.8 366.9 L187.3 361.1 L192.6 346.1 L197.8 351.3 L204.3 358.5 L208.2 359.8 L212.1 374.1 L220.0 378.0 L228.2 370.8 L235.0 385.0 L245.0 390.0 L256.4 392.3 L261.6 393.6 L266.8 390.4 L270.7 391.7 L274.6 389.1 L279.8 389.1 L283.0 392.3 L287.0 381.9 L290.2 378.0 L296.7 377.3 L299.3 379.3 L302.6 363.7 L307.1 372.1 L310.6 377.3 L314.5 367.6 L322.9 366.9 L327.5 371.2 L332.0 371.5 L335.3 376.4 L339.9 372.1 L343.8 373.4 L351.6 379.3 L360.0 360.4 L364.6 363.4 L372.4 366.9 L376.3 360.4 L380.2 368.9 L385.4 370.2 L393.2 376.7 L395.8 377.3 L403.7 356.5 L409.5 349.3 L413.4 355.2 L421.2 355.2 L429.7 369.5 L433.6 363.0 L441.4 366.9 L446.6 362.6 L450.5 363.7 L454.5 355.2 L458.5 365.0 L462.4 368.2 L467.0 365.0 L470.2 366.9 L474.8 378.6 L482.6 357.2 L489.8 359.8 L499.5 369.5 L504.1 369.5 L510.6 358.5 L523.6 358.5 L527.5 362.4 L532.7 357.8 L536.6 365.6 L544.4 346.7 L548.4 355.9 L552.3 341.5 L556.2 352.0 L560.1 355.9 L566.6 350.0 L573.1 347.4 L577.0 355.2 L580.9 341.5 L584.8 337.6 L588.7 340.9 L593.3 348.7 L601.3 338.3 L605.8 348.0 L614.3 352.6 L617.5 351.3 L622.1 350.0 L630.6 334.4 L638.4 348.0 L645.5 345.4 L651.4 351.3 L661.8 361.1 L667.0 362.4 L671.6 372.8 L676.1 369.5 L683.3 377.3 L687.8 360.4 L691.8 365.0 L695.7 366.3 L700.9 372.1 L705.4 361.1 L708.7 361.1 L712.6 372.8 L717.8 372.8 L720.4 365.6 L726.9 364.3 L736.0 370.8 L741.2 368.2 L746.4 372.1 L749.2 371.5 L753.1 372.8 L757.0 369.5 L760.3 372.1 L766.8 371.5 L769.4 354.6 L773.9 362.4 L777.9 363.7 L782.4 362.4 L787.0 348.0 L793.5 342.2 L801.3 337.6 L806.5 337.6 L810.4 332.4 L814.3 348.0 L818.9 346.1 L823.4 337.0 L827.3 338.3 L831.2 334.4 L835.8 340.2 L839.7 330.5 L844.3 336.3 L851.4 335.0 L856.0 332.4 L858.6 334.4 L858.6 381.0 L17.0 381.0Z" fill="url(#rsig)"/><path d="M17.0 355.2 L19.2 359.8 L24.4 360.4 L28.3 363.4 L40.0 351.3 L48.5 359.8 L52.4 359.8 L56.3 356.5 L60.2 371.5 L65.4 344.8 L71.3 346.7 L76.5 348.7 L81.1 358.5 L85.0 346.7 L93.4 355.2 L101.2 356.5 L105.8 351.7 L110.4 353.3 L118.2 367.6 L126.0 370.8 L132.5 361.1 L138.3 370.8 L146.8 371.5 L150.7 373.4 L159.2 360.4 L163.5 370.5 L171.7 376.0 L175.6 376.7 L178.9 380.6 L182.8 366.9 L187.3 361.1 L192.6 346.1 L197.8 351.3 L204.3 358.5 L208.2 359.8 L212.1 374.1 L220.0 378.0 L228.2 370.8 L235.0 385.0 L245.0 390.0 L256.4 392.3 L261.6 393.6 L266.8 390.4 L270.7 391.7 L274.6 389.1 L279.8 389.1 L283.0 392.3 L287.0 381.9 L290.2 378.0 L296.7 377.3 L299.3 379.3 L302.6 363.7 L307.1 372.1 L310.6 377.3 L314.5 367.6 L322.9 366.9 L327.5 371.2 L332.0 371.5 L335.3 376.4 L339.9 372.1 L343.8 373.4 L351.6 379.3 L360.0 360.4 L364.6 363.4 L372.4 366.9 L376.3 360.4 L380.2 368.9 L385.4 370.2 L393.2 376.7 L395.8 377.3 L403.7 356.5 L409.5 349.3 L413.4 355.2 L421.2 355.2 L429.7 369.5 L433.6 363.0 L441.4 366.9 L446.6 362.6 L450.5 363.7 L454.5 355.2 L458.5 365.0 L462.4 368.2 L467.0 365.0 L470.2 366.9 L474.8 378.6 L482.6 357.2 L489.8 359.8 L499.5 369.5 L504.1 369.5 L510.6 358.5 L523.6 358.5 L527.5 362.4 L532.7 357.8 L536.6 365.6 L544.4 346.7 L548.4 355.9 L552.3 341.5 L556.2 352.0 L560.1 355.9 L566.6 350.0 L573.1 347.4 L577.0 355.2 L580.9 341.5 L584.8 337.6 L588.7 340.9 L593.3 348.7 L601.3 338.3 L605.8 348.0 L614.3 352.6 L617.5 351.3 L622.1 350.0 L630.6 334.4 L638.4 348.0 L645.5 345.4 L651.4 351.3 L661.8 361.1 L667.0 362.4 L671.6 372.8 L676.1 369.5 L683.3 377.3 L687.8 360.4 L691.8 365.0 L695.7 366.3 L700.9 372.1 L705.4 361.1 L708.7 361.1 L712.6 372.8 L717.8 372.8 L720.4 365.6 L726.9 364.3 L736.0 370.8 L741.2 368.2 L746.4 372.1 L749.2 371.5 L753.1 372.8 L757.0 369.5 L760.3 372.1 L766.8 371.5 L769.4 354.6 L773.9 362.4 L777.9 363.7 L782.4 362.4 L787.0 348.0 L793.5 342.2 L801.3 337.6 L806.5 337.6 L810.4 332.4 L814.3 348.0 L818.9 346.1 L823.4 337.0 L827.3 338.3 L831.2 334.4 L835.8 340.2 L839.7 330.5 L844.3 336.3 L851.4 335.0 L856.0 332.4 L858.6 334.4" fill="none" stroke="#f59a40" stroke-width="1.15" stroke-linejoin="round"/><path d="M175.6 376.7L178.9 380.6M228.2 370.8L235.0 385.0M235.0 385.0L245.0 390.0M245.0 390.0L256.4 392.3M256.4 392.3L261.6 393.6M261.6 393.6L266.8 390.4M266.8 390.4L270.7 391.7M270.7 391.7L274.6 389.1M274.6 389.1L279.8 389.1M279.8 389.1L283.0 392.3M283.0 392.3L287.0 381.9" fill="none" stroke="#2ad22a" stroke-width="1.15" stroke-linecap="round"/></g><g fill="none" stroke="#a6b9cb" stroke-width="1" shape-rendering="crispEdges"><rect x="16.5" y="34.5" width="883" height="211"/><rect x="16.5" y="251.5" width="883" height="65"/><rect x="16.5" y="322.5" width="883" height="74"/></g><g stroke="#a6b9cb" stroke-width="1" shape-rendering="crispEdges"><line x1="899" y1="45.5" x2="903" y2="45.5"/><line x1="899" y1="75.5" x2="903" y2="75.5"/><line x1="899" y1="105.5" x2="903" y2="105.5"/><line x1="899" y1="135.5" x2="903" y2="135.5"/><line x1="899" y1="196.5" x2="903" y2="196.5"/><line x1="899" y1="226.5" x2="903" y2="226.5"/><line x1="899" y1="275.5" x2="903" y2="275.5"/><line x1="899" y1="339.5" x2="903" y2="339.5"/><line x1="899" y1="366.5" x2="903" y2="366.5"/><line x1="24.5" y1="396" x2="24.5" y2="400"/><line x1="48.5" y1="396" x2="48.5" y2="400"/><line x1="73.5" y1="396" x2="73.5" y2="400"/><line x1="97.5" y1="396" x2="97.5" y2="400"/><line x1="122.5" y1="396" x2="122.5" y2="400"/><line x1="146.5" y1="396" x2="146.5" y2="400"/><line x1="171.5" y1="396" x2="171.5" y2="400"/><line x1="196.5" y1="396" x2="196.5" y2="400"/><line x1="220.5" y1="396" x2="220.5" y2="400"/><line x1="245.5" y1="396" x2="245.5" y2="400"/><line x1="269.5" y1="396" x2="269.5" y2="400"/><line x1="294.5" y1="396" x2="294.5" y2="400"/><line x1="319.5" y1="396" x2="319.5" y2="400"/><line x1="343.5" y1="396" x2="343.5" y2="400"/><line x1="368.5" y1="396" x2="368.5" y2="400"/><line x1="392.5" y1="396" x2="392.5" y2="400"/><line x1="417.5" y1="396" x2="417.5" y2="400"/><line x1="441.5" y1="396" x2="441.5" y2="400"/><line x1="466.5" y1="396" x2="466.5" y2="400"/><line x1="491.5" y1="396" x2="491.5" y2="400"/><line x1="515.5" y1="396" x2="515.5" y2="400"/><line x1="540.5" y1="396" x2="540.5" y2="400"/><line x1="564.5" y1="396" x2="564.5" y2="400"/><line x1="589.5" y1="396" x2="589.5" y2="400"/><line x1="614.5" y1="396" x2="614.5" y2="400"/><line x1="638.5" y1="396" x2="638.5" y2="400"/><line x1="654.5" y1="396" x2="654.5" y2="400"/><line x1="679.5" y1="396" x2="679.5" y2="400"/><line x1="704.5" y1="396" x2="704.5" y2="400"/><line x1="728.5" y1="396" x2="728.5" y2="400"/><line x1="753.5" y1="396" x2="753.5" y2="400"/><line x1="778.5" y1="396" x2="778.5" y2="400"/><line x1="802.5" y1="396" x2="802.5" y2="400"/><line x1="827.5" y1="396" x2="827.5" y2="400"/><line x1="851.5" y1="396" x2="851.5" y2="400"/><line x1="876.5" y1="396" x2="876.5" y2="400"/></g><g font-size="10.6" fill="#f2f2f2" stroke="#f2f2f2" stroke-width="0.3"><text x="906.5" y="52">0.9100</text><text x="906.5" y="82">0.9050</text><text x="906.5" y="112">0.9000</text><text x="906.5" y="142">0.8950</text><text x="906.5" y="203">0.8850</text><text x="906.5" y="233">0.8800</text><text x="908" y="282">+0.000</text><text x="906.5" y="346">60</text><text x="906.5" y="373">40</text></g><g font-size="10.5" fill="#f0f0f0" stroke="#f0f0f0" stroke-width="0.3" text-anchor="middle"><text x="23.7" y="419">20</text><text x="47.7" y="419">23</text><text x="72.7" y="419">24</text><text x="96.7" y="419">25</text><text x="121.7" y="419">26</text><text x="145.7" y="419">27</text><text x="170.7" y="419">30</text><text x="195.7" y="419">1</text><text x="219.7" y="419">2</text><text x="244.7" y="419">3</text><text x="268.7" y="419">4</text><text x="293.7" y="419">7</text><text x="318.7" y="419">8</text><text x="342.7" y="419">9</text><text x="367.7" y="419">10</text><text x="391.7" y="419">11</text><text x="416.7" y="419">14</text><text x="440.7" y="419">15</text><text x="465.7" y="419">16</text><text x="490.7" y="419">17</text><text x="514.7" y="419">18</text><text x="539.7" y="419">21</text><text x="563.7" y="419">22</text><text x="588.7" y="419">23</text><text x="613.7" y="419">24</text><text x="637.7" y="419">28</text><text x="653.7" y="419">29</text><text x="678.7" y="419">30</text><text x="703.7" y="419">4</text><text x="727.7" y="419">5</text><text x="752.7" y="419">6</text><text x="777.7" y="419">7</text><text x="801.7" y="419">8</text><text x="826.7" y="419">11</text><text x="850.7" y="419">12</text><text x="875.7" y="419">13</text></g><rect x="16.5" y="373.5" width="61.5" height="19" rx="2.5" fill="#5b6b7f" stroke="#9fb0c2" stroke-width="1"/><line x1="16.5" y1="373" x2="16.5" y2="400" stroke="#c4ece4" stroke-width="1.6"/><text x="24.3" y="387" font-size="11" fill="#f4f4f4" stroke="#f4f4f4" stroke-width="0.25">Нов 2020</text><rect x="196.5" y="373.5" width="60" height="19" rx="2.5" fill="#5b6b7f" stroke="#9fb0c2" stroke-width="1"/><line x1="196.5" y1="373" x2="196.5" y2="400" stroke="#c4ece4" stroke-width="1.6"/><text x="204.3" y="387" font-size="11" fill="#f4f4f4" stroke="#f4f4f4" stroke-width="0.25">Дек 2020</text><rect x="704.5" y="373.5" width="60" height="19" rx="2.5" fill="#5b6b7f" stroke="#9fb0c2" stroke-width="1"/><line x1="704.5" y1="373" x2="704.5" y2="400" stroke="#c4ece4" stroke-width="1.6"/><text x="712.3" y="387" font-size="11" fill="#f4f4f4" stroke="#f4f4f4" stroke-width="0.25">Янв 2021</text><rect x="899" y="152" width="48" height="21" fill="#ffffff"/><text x="906.5" y="167" font-size="10.6" fill="#3c3c3c">0.8905</text><text x="47" y="46" font-size="9.4" letter-spacing="0.4" fill="#2424e6" stroke="#2424e6" stroke-width="0.2">ential_Moving_Average</text><text x="155.5" y="46" font-size="9.4" letter-spacing="0.4" fill="#d82020" stroke="#d82020" stroke-width="0.2">Exponential_Moving_Average</text><rect x="16" y="34" width="31" height="22" fill="#f0f0f0"/><rect x="16" y="34" width="31" height="5" fill="#d4d4d4"/><rect x="20.5" y="42.5" width="9" height="9" rx="2" fill="url(#redb)" stroke="#a01020" stroke-width="1"/><rect x="33.5" y="42.5" width="9" height="9" rx="2" fill="url(#blueb)" stroke="#1060a8" stroke-width="1"/><rect x="17" y="252" width="30" height="13" fill="#3b4149"/><rect x="17" y="323" width="17" height="13" fill="#3b4149"/><text x="18.3" y="262.5" font-size="10.4" letter-spacing="-0.6" fill="#2a802a" stroke="#2a802a" stroke-width="0.05">MACD</text><text x="18.3" y="334" font-size="10" letter-spacing="-0.5" fill="#e88a3a" stroke="#e88a3a" stroke-width="0.2">RSI</text></svg></body></html>
